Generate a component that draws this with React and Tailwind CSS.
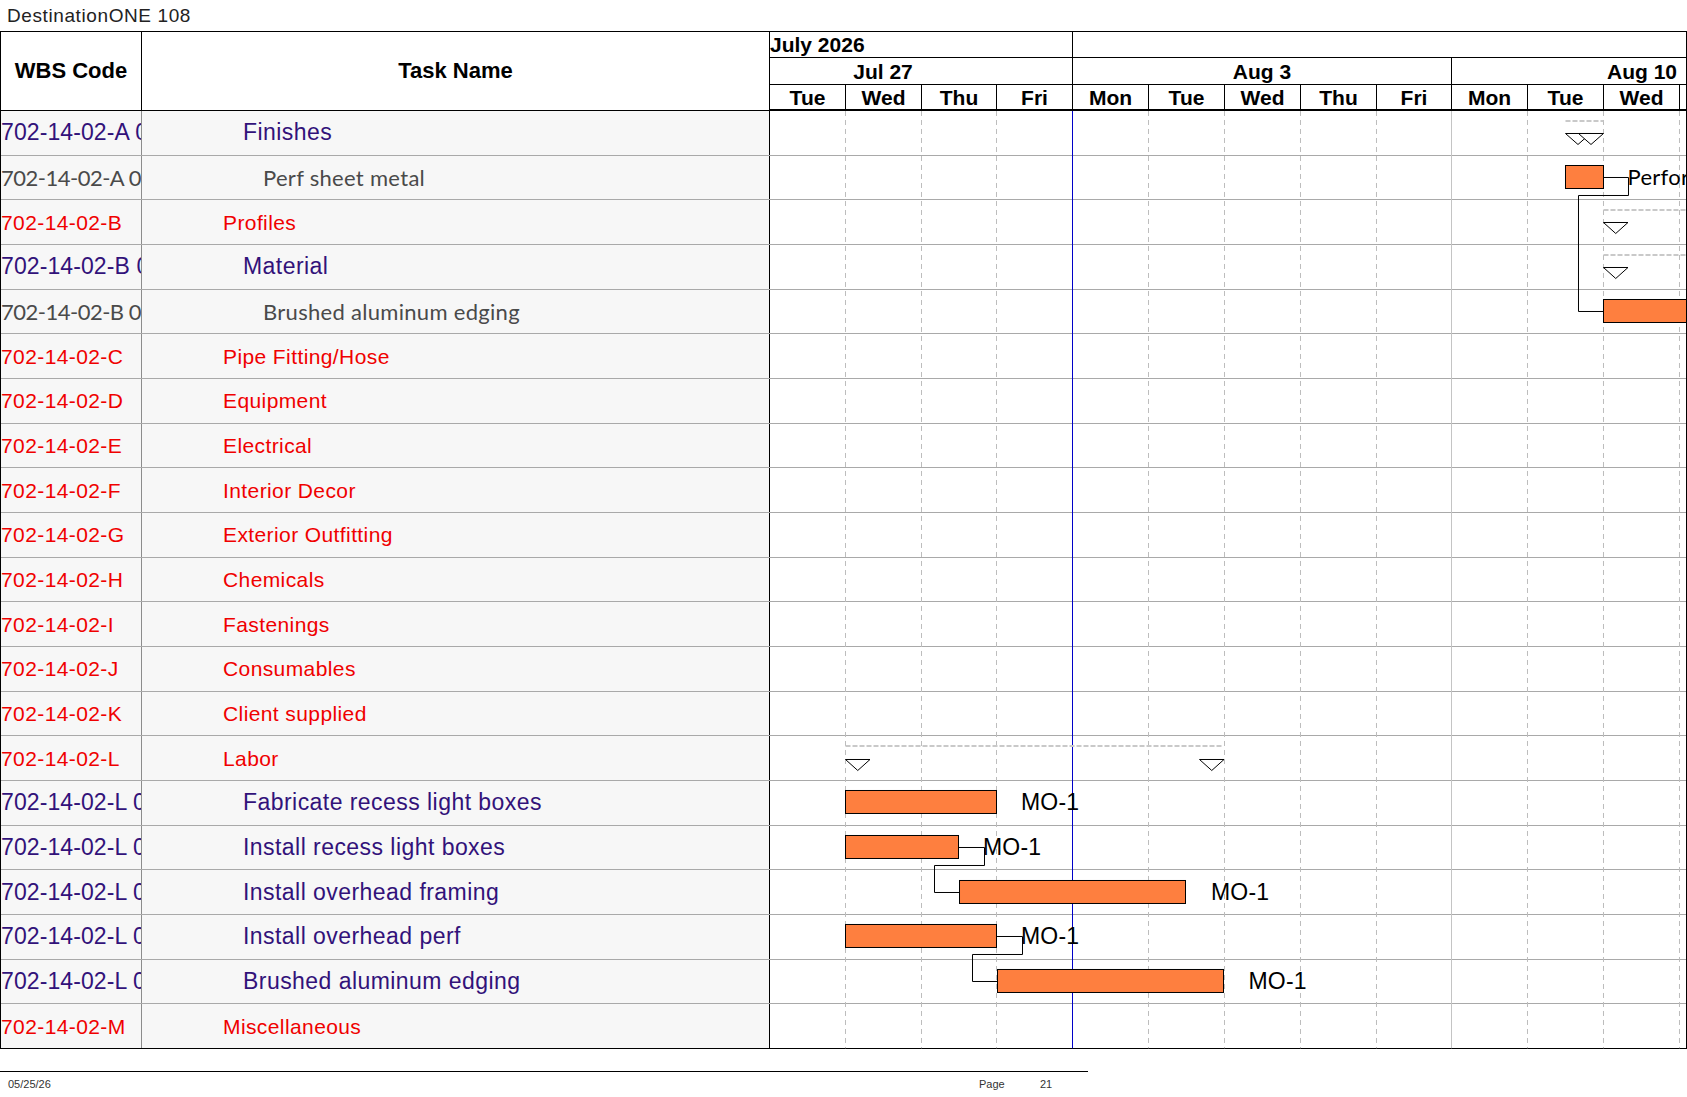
import React from "react";

const ROW_H = 44.68;
const B = [0, 76, 152, 227, 303, 379, 455, 531, 607, 682, 758, 834, 910];
const CHART_W = 916;

const rows = [
  { wbs: "702-14-02-A 01", name: "Finishes", t: "p" },
  { wbs: "702-14-02-A 01.01", name: "Perf sheet metal", t: "g" },
  { wbs: "702-14-02-B", name: "Profiles", t: "r" },
  { wbs: "702-14-02-B 01", name: "Material", t: "p" },
  { wbs: "702-14-02-B 01.01", name: "Brushed aluminum edging", t: "g" },
  { wbs: "702-14-02-C", name: "Pipe Fitting/Hose", t: "r" },
  { wbs: "702-14-02-D", name: "Equipment", t: "r" },
  { wbs: "702-14-02-E", name: "Electrical", t: "r" },
  { wbs: "702-14-02-F", name: "Interior Decor", t: "r" },
  { wbs: "702-14-02-G", name: "Exterior Outfitting", t: "r" },
  { wbs: "702-14-02-H", name: "Chemicals", t: "r" },
  { wbs: "702-14-02-I", name: "Fastenings", t: "r" },
  { wbs: "702-14-02-J", name: "Consumables", t: "r" },
  { wbs: "702-14-02-K", name: "Client supplied", t: "r" },
  { wbs: "702-14-02-L", name: "Labor", t: "r" },
  { wbs: "702-14-02-L 01", name: "Fabricate recess light boxes", t: "p" },
  { wbs: "702-14-02-L 02", name: "Install recess light boxes", t: "p" },
  { wbs: "702-14-02-L 03", name: "Install overhead framing", t: "p" },
  { wbs: "702-14-02-L 04", name: "Install overhead perf", t: "p" },
  { wbs: "702-14-02-L 05", name: "Brushed aluminum edging", t: "p" },
  { wbs: "702-14-02-M", name: "Miscellaneous", t: "r" },
];

const styles = {
  p: {
    text: "text-[23px] text-[#32127a] font-['Liberation_Sans',Arial,sans-serif]",
    wbs: "tracking-[0.1px]",
    name: "tracking-[0.45px]",
    pad: "pl-[101px]",
  },
  r: {
    text: "text-[21px] text-[#f00000] font-['Liberation_Sans',Arial,sans-serif]",
    wbs: "tracking-[0.4px]",
    name: "tracking-[0.4px]",
    pad: "pl-[81px]",
  },
  g: {
    text: "text-[22px] text-[#4a4a4a] font-['Lato','Open_Sans',sans-serif]",
    wbs: "tracking-[-0.5px]",
    name: "tracking-[0.3px]",
    pad: "pl-[121px]",
  },
};

const days = [
  { d: "Tue", w: "w-[76px]" },
  { d: "Wed", w: "w-[76px]" },
  { d: "Thu", w: "w-[75px]" },
  { d: "Fri", w: "w-[76px]" },
  { d: "Mon", w: "w-[76px]" },
  { d: "Tue", w: "w-[76px]" },
  { d: "Wed", w: "w-[76px]" },
  { d: "Thu", w: "w-[76px]" },
  { d: "Fri", w: "w-[75px]" },
  { d: "Mon", w: "w-[76px]" },
  { d: "Tue", w: "w-[76px]" },
  { d: "Wed", w: "w-[76px]" },
];

const rowTop = (i) => i * ROW_H;
const barTop = (i) => Math.round(rowTop(i) + 9);
const mid = (i) => barTop(i) + 12.5;

function Bar({ i, x1, x2 }) {
  return (
    <rect
      x={x1}
      y={barTop(i) + 0.5}
      width={x2 - x1}
      height={23}
      fill="#fe7f3f"
      stroke="#000"
      strokeWidth="1"
    />
  );
}

function Tri({ i, x0, x1 }) {
  const top = Math.round(rowTop(i) + 22) + 0.5;
  return (
    <polygon
      points={`${x0},${top} ${x1},${top} ${(x0 + x1) / 2},${top + 11}`}
      fill="#fff"
      stroke="#000"
      strokeWidth="1"
    />
  );
}

function Summary({ i, x0, x1 }) {
  const y = Math.round(rowTop(i) + 8.5) + 1;
  return (
    <line
      x1={x0}
      x2={x1}
      y1={y}
      y2={y}
      stroke="#c9c9c9"
      strokeWidth="2"
      strokeDasharray="5 2"
    />
  );
}

function Label({ i, x, children, lato }) {
  return (
    <text
      x={x}
      y={mid(i) + 8}
      fontSize={lato ? 22 : 23}
      fontFamily={lato ? "Lato, 'Open Sans', sans-serif" : "'Liberation Sans', Arial, sans-serif"}
      letterSpacing={lato ? 0.3 : 0.2}
      fill="#000"
    >
      {children}
    </text>
  );
}

function Chart() {
  const H = ROW_H * rows.length;
  return (
    <svg
      className="absolute top-0 left-[769px] pointer-events-none"
      width={CHART_W}
      height={H}
      viewBox={`0 0 ${CHART_W} ${H}`}
    >
      {B.slice(1).map((b) => {
        const x = b - 0.5;
        if (b === 303)
          return <line key={b} x1={x} x2={x} y1={0} y2={H - 1} stroke="#0000c8" strokeWidth="1" />;
        if (b === 682)
          return <line key={b} x1={x} x2={x} y1={0} y2={H - 1} stroke="#c4c4c4" strokeWidth="1" />;
        return (
          <line
            key={b}
            x1={x}
            x2={x}
            y1={0}
            y2={H - 1}
            stroke="#bdbdbd"
            strokeWidth="1"
            strokeDasharray="5 4"
          />
        );
      })}

      {/* Finishes summary */}
      <Summary i={0} x0={795.5} x1={833.5} />
      <Tri i={0} x0={795.5} x1={820.5} />
      <Tri i={0} x0={808.5} x1={833.5} />

      {/* Profiles / Material summaries */}
      <Summary i={2} x0={833.5} x1={CHART_W} />
      <Tri i={2} x0={833.5} x1={858} />
      <Summary i={3} x0={833.5} x1={CHART_W} />
      <Tri i={3} x0={833.5} x1={858} />

      {/* Labor summary */}
      <Summary i={14} x0={75.5} x1={453.5} />
      <Tri i={14} x0={75.5} x1={100} />
      <Tri i={14} x0={429.5} x1={454} />

      {/* connectors */}
      <path
        d={`M833.5 ${mid(1)} H858.5 V84.5 H808.5 V${mid(4)} H833.5`}
        fill="none"
        stroke="#000"
        strokeWidth="1"
      />
      <path
        d={`M188.5 ${mid(16)} H214.5 V754.5 H164.5 V${mid(17)} H189.5`}
        fill="none"
        stroke="#000"
        strokeWidth="1"
      />
      <path
        d={`M226.5 ${mid(18)} H252.5 V843.5 H202.5 V${mid(19)} H227.5`}
        fill="none"
        stroke="#000"
        strokeWidth="1"
      />

      {/* bars */}
      <Bar i={1} x1={795.5} x2={833.5} />
      <Bar i={4} x1={833.5} x2={CHART_W + 10} />
      <Bar i={15} x1={75.5} x2={226.5} />
      <Bar i={16} x1={75.5} x2={188.5} />
      <Bar i={17} x1={189.5} x2={415.5} />
      <Bar i={18} x1={75.5} x2={226.5} />
      <Bar i={19} x1={227.5} x2={453.5} />

      {/* labels */}
      <Label i={1} x={857.5} lato>
        Perforated
      </Label>
      <Label i={15} x={251}>MO-1</Label>
      <Label i={16} x={213}>MO-1</Label>
      <Label i={17} x={441}>MO-1</Label>
      <Label i={18} x={251}>MO-1</Label>
      <Label i={19} x={478.5}>MO-1</Label>
    </svg>
  );
}

export default function App() {
  return (
    <div className="w-[1687px] h-[1097px] bg-white overflow-hidden font-['Liberation_Sans',Arial,sans-serif] text-black">
      {/* title */}
      <div className="h-[31px] flex items-center pl-[7px] text-[19px] tracking-[0.6px] text-[#222] leading-none">
        DestinationONE 108
      </div>

      {/* table */}
      <div className="w-[1687px] border-t border-l border-r border-black">
        {/* header */}
        <div className="flex h-[79px]">
          <div className="w-[141px] shrink-0 border-r border-b border-black flex items-center justify-center text-[22px] font-bold leading-none">
            WBS Code
          </div>
          <div className="w-[628px] shrink-0 border-r border-b border-black flex items-center justify-center text-[22px] font-bold leading-none">
            Task Name
          </div>
          <div className="flex-1 flex flex-col text-[21px] font-bold leading-none overflow-hidden">
            <div className="h-[26px] flex border-b border-black">
              <div className="w-[303px] shrink-0 border-r border-black flex items-center">July 2026</div>
              <div className="flex-1"></div>
            </div>
            <div className="h-[27px] flex border-b border-black">
              <div className="w-[303px] shrink-0 border-r border-black flex items-center overflow-hidden">
                <div className="w-[380px] shrink-0 ml-[-77px] text-center">Jul 27</div>
              </div>
              <div className="w-[379px] shrink-0 border-r border-black flex items-center justify-center">
                Aug 3
              </div>
              <div className="flex-1 flex items-center overflow-hidden">
                <div className="w-[380px] shrink-0 text-center">Aug 10</div>
              </div>
            </div>
            <div className="h-[26px] flex border-b-2 border-black">
              {days.map((d, k) => (
                <div
                  key={k}
                  className={`${d.w} shrink-0 border-r border-black flex items-center justify-center`}
                >
                  {d.d}
                </div>
              ))}
              <div className="flex-1"></div>
            </div>
          </div>
        </div>

        {/* body */}
        <div className="relative">
          {rows.map((r, i) => {
            const s = styles[r.t];
            const last = i === rows.length - 1;
            return (
              <div
                key={i}
                className={`flex h-[44.68px] border-b ${last ? "border-black" : "border-[#a9a9a9]"}`}
              >
                <div
                  className={`w-[141px] shrink-0 bg-[#f7f7f7] border-r border-[#8c8c8c] flex items-center overflow-hidden whitespace-nowrap leading-none ${s.text} ${s.wbs}`}
                >
                  {r.wbs}
                </div>
                <div
                  className={`w-[628px] shrink-0 bg-[#f7f7f7] border-r border-black flex items-center overflow-hidden whitespace-nowrap leading-none ${s.pad} ${s.text} ${s.name}`}
                >
                  {r.name}
                </div>
                <div className="flex-1 bg-white"></div>
              </div>
            );
          })}
          <Chart />
        </div>
      </div>

      {/* footer */}
      <div className="mt-[22px] w-[1088px] border-t border-black">
        <div className="flex text-[11px] leading-none pt-[7px] text-[#333]">
          <span className="w-[979px] shrink-0 pl-[8px]">05/25/26</span>
          <span className="w-[61px] shrink-0">Page</span>
          <span>21</span>
        </div>
      </div>
    </div>
  );
}
